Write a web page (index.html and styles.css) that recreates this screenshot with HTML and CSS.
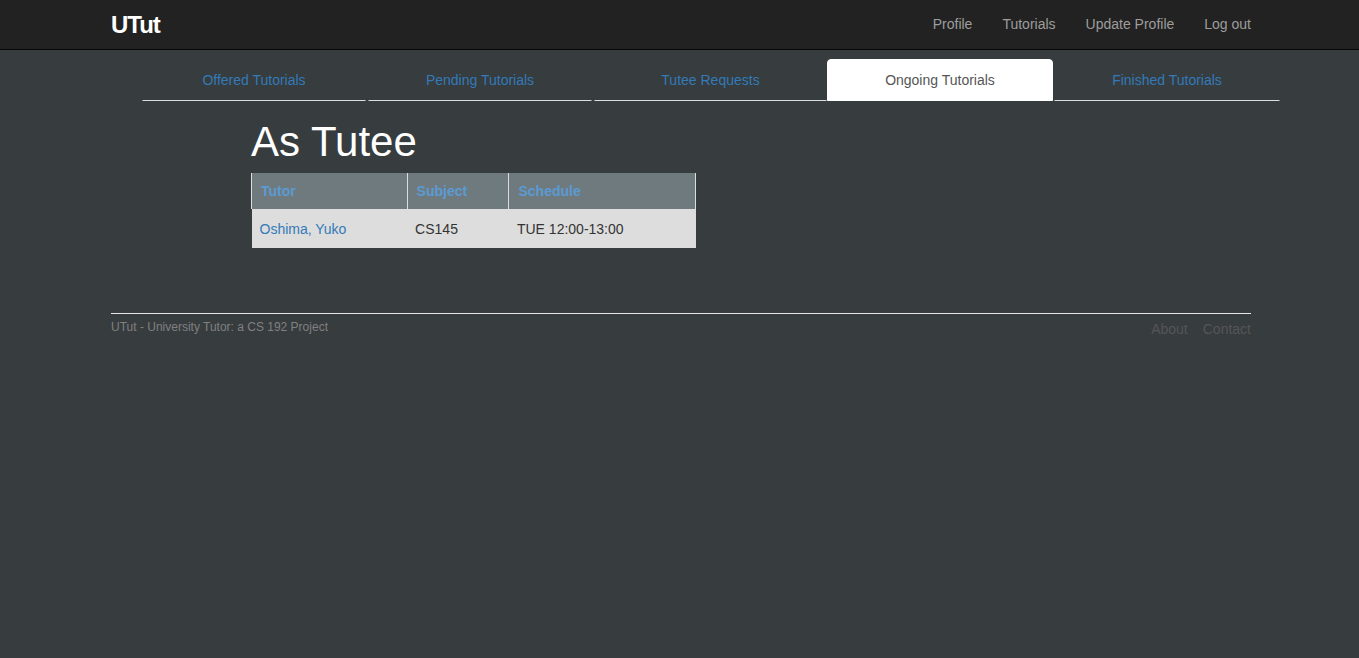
FILE: index.html
```html
<!DOCTYPE html>
<html lang="en">
<head>
<meta charset="utf-8">
<title>UTut - Ongoing Tutorials</title>
<link rel="stylesheet" href="styles.css">
</head>
<body>
<nav class="navbar">
  <div class="container navbar-inner">
    <a class="brand" href="#">UTut</a>
    <ul class="nav-links">
      <li><a href="#">Profile</a></li>
      <li><a href="#">Tutorials</a></li>
      <li><a href="#">Update Profile</a></li>
      <li><a href="#">Log out</a></li>
    </ul>
  </div>
</nav>

<main class="container">
  <ul class="tabs">
    <li class="tab tab-1"><a href="#">Offered Tutorials</a></li>
    <li class="tab tab-2"><a href="#">Pending Tutorials</a></li>
    <li class="tab tab-3"><a href="#">Tutee Requests</a></li>
    <li class="tab tab-4 active"><a href="#">Ongoing Tutorials</a></li>
    <li class="tab tab-5"><a href="#">Finished Tutorials</a></li>
  </ul>

  <section class="content">
    <h1 class="title">As Tutee</h1>
    <table class="tutorials">
      <thead>
        <tr>
          <th class="col-tutor">Tutor</th>
          <th class="col-subject">Subject</th>
          <th class="col-schedule">Schedule</th>
        </tr>
      </thead>
      <tbody>
        <tr>
          <td><a href="#">Oshima, Yuko</a></td>
          <td>CS145</td>
          <td>TUE 12:00-13:00</td>
        </tr>
      </tbody>
    </table>
  </section>

  <footer class="footer">
    <p class="footer-note">UTut - University Tutor: a CS 192 Project</p>
    <ul class="footer-links">
      <li><a href="#">About</a></li>
      <li><a href="#">Contact</a></li>
    </ul>
  </footer>
</main>
</body>
</html>
```

FILE: styles.css
```css
* {
  box-sizing: border-box;
}

html, body {
  margin: 0;
  padding: 0;
}

body {
  background: #373c3f;
  font-family: "Liberation Sans", Arial, Helvetica, sans-serif;
  font-size: 14px;
  line-height: 20px;
  color: #333;
  min-height: 658px;
}

a {
  text-decoration: none;
  color: #337ab7;
}

ul {
  list-style: none;
  margin: 0;
  padding: 0;
}

.container {
  width: 1140px;
  margin-left: 111px;
}

/* Navbar */
.navbar {
  background: #222222;
  border-bottom: 1px solid #080808;
  height: 50px;
}

.navbar-inner {
  display: flex;
  justify-content: space-between;
  align-items: flex-start;
  height: 49px;
}

.brand {
  display: block;
  padding: 15px 0;
  line-height: 20px;
  font-size: 24px;
  font-weight: bold;
  letter-spacing: -1px;
  color: #ffffff;
}

.nav-links {
  display: flex;
  margin-right: -15px;
}

.nav-links a {
  display: block;
  padding: 14px 15px 16px;
  line-height: 20px;
  color: #9d9d9d;
}

/* Tabs */
.tabs {
  display: flex;
  margin: 9px 0 0 31px;
  width: 1138px;
}

.tab a {
  display: block;
  padding: 10px 0;
  line-height: 20px;
  text-align: center;
  border: 1px solid transparent;
  border-bottom-color: #dddddd;
  border-radius: 4px 4px 0 0;
  color: #337ab7;
}

.tab-1 { width: 224px; margin-right: 2px; }
.tab-2 { width: 224px; margin-right: 2px; }
.tab-3 { width: 233px; }
.tab-4 { width: 226px; margin-right: 1px; }
.tab-5 { width: 226px; }

.tab-1 a, .tab-2 a, .tab-3 a, .tab-5 a {
  border-radius: 0;
}

.tab.active a {
  background: #ffffff;
  border-color: #ffffff;
  color: #555555;
}

/* Content */
.content {
  margin-left: 140px;
  margin-bottom: 65px;
}

.title {
  margin: 18px 0 8px;
  font-size: 42px;
  line-height: 46px;
  font-weight: normal;
  color: #ffffff;
}

.tutorials {
  border-collapse: collapse;
  width: 445px;
}

.tutorials th {
  background: #6f7a7e;
  color: #5b9bd3;
  font-weight: bold;
  text-align: left;
  padding: 8px 8px 8px 9px;
  line-height: 20px;
  height: 36px;
  border-left: 1px solid #dddddd;
  border-right: 1px solid #dddddd;
}

.col-tutor { width: 156px; }
.col-subject { width: 102px; }
.col-schedule { width: 187px; }

.tutorials td {
  background: #dddddd;
  padding: 10px 8px 9px 8px;
  line-height: 20px;
  color: #333333;
}

.tutorials td a {
  color: #337ab7;
}

/* Footer */
.footer {
  border-top: 1px solid #e6e6e6;
  display: flex;
  justify-content: space-between;
  align-items: flex-start;
}

.footer-note {
  margin: 5px 0 0;
  font-size: 12px;
  line-height: 17px;
  color: #808080;
}

.footer-links {
  display: flex;
  gap: 15px;
  margin-top: 5px;
}

.footer-links a {
  color: #555555;
  line-height: 20px;
}
```
